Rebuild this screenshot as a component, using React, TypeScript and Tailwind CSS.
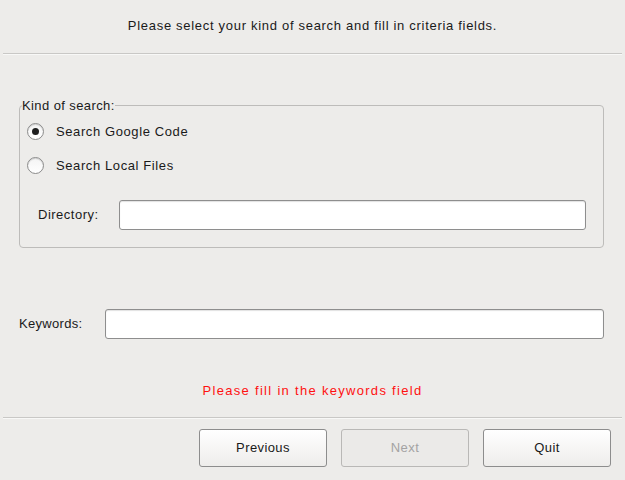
import React from 'react'

const font = { fontFamily: '"Liberation Sans", Arial, sans-serif' }

function Radio({ checked }: { checked?: boolean }) {
  return (
    <span className="flex h-[17px] w-[17px] items-center justify-center rounded-full border border-[#8c8c8c] bg-gradient-to-b from-[#f4f4f4] to-white shadow-[inset_0_1px_1px_rgba(0,0,0,0.15)]">
      {checked && <span className="h-[7px] w-[7px] rounded-full bg-[#1e1e1e]" />}
    </span>
  )
}

function TextInput({ className }: { className: string }) {
  return (
    <div
      className={`h-[30px] rounded-[3px] border border-[#8e8e8e] bg-white shadow-[inset_0_1px_1px_rgba(0,0,0,0.12)] ${className}`}
    />
  )
}

function Button({ label, disabled }: { label: string; disabled?: boolean }) {
  return (
    <button
      className={`flex h-[38px] w-[128px] items-center justify-center rounded-[3px] border text-[13px] tracking-[0.4px] ${
        disabled
          ? 'border-[#b9b8b6] bg-[#ebeae8] text-[#a3a3a3]'
          : 'border-[#8d8d8d] bg-gradient-to-b from-white to-[#eeedeb] text-[#1a1a1a]'
      }`}
    >
      {label}
    </button>
  )
}

function Separator() {
  return <div className="mx-[3px] h-[2px] border-t border-[#c9c8c6] bg-[#f8f8f7]" />
}

export default function App() {
  const radios = [
    { label: 'Search Google Code', checked: true },
    { label: 'Search Local Files', checked: false },
  ]

  return (
    <div style={font} className="flex h-[480px] w-[625px] flex-col bg-[#edecea] text-[13px] text-[#1a1a1a]">
      {/* Header */}
      <div className="flex h-[53px] items-center justify-center pb-[2px] tracking-[0.7px]">
        Please select your kind of search and fill in criteria fields.
      </div>
      <Separator />

      {/* Kind of search group */}
      <fieldset className="ml-[19px] mr-[21px] mt-[43px] h-[150px] rounded-[4px] border border-[#bdbcba] px-[2px] pt-0">
        <legend className="px-0 leading-[15px] tracking-[0.4px]">Kind of search:</legend>
        <div className="flex flex-col pl-[5px]">
          {radios.map((r, i) => (
            <label key={i} className={`flex items-center gap-[12px] tracking-[0.6px] ${i === 0 ? 'mt-[10px]' : 'mt-[17px]'}`}>
              <Radio checked={r.checked} />
              <span className="leading-[17px]">{r.label}</span>
            </label>
          ))}
          <div className="mt-[26px] flex items-center pl-[11px] pr-[15px]">
            <span className="w-[81px] tracking-[0.5px]">Directory:</span>
            <TextInput className="flex-1" />
          </div>
        </div>
      </fieldset>

      {/* Keywords */}
      <div className="ml-[19px] mr-[21px] mt-[61px] flex items-center">
        <span className="w-[86px] tracking-[0.3px]">Keywords:</span>
        <TextInput className="flex-1" />
      </div>

      {/* Error */}
      <div className="mt-[44px] text-center leading-[15px] tracking-[1.3px] text-[#ff1111]">
        Please fill in the keywords field
      </div>

      <div className="mt-[19px]">
        <Separator />
      </div>

      {/* Buttons */}
      <div className="mr-[14px] mt-[10px] flex justify-end gap-[14px]">
        <Button label="Previous" />
        <Button label="Next" disabled />
        <Button label="Quit" />
      </div>
    </div>
  )
}
